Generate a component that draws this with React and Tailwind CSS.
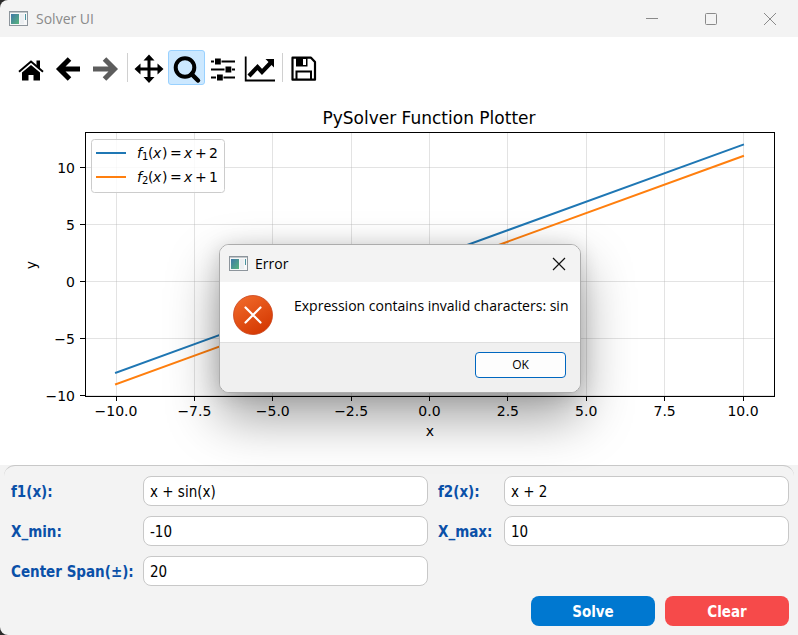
import React from "react";

const uiFont = "font-['Segoe_UI','Open_Sans',sans-serif]";
const formFont = "font-['DejaVu_Sans_Condensed','DejaVu_Sans',sans-serif]";

const xTicks = [-10, -7.5, -5, -2.5, 0, 2.5, 5, 7.5, 10];
const yTicks = [-10, -5, 0, 5, 10];
const px = (x) => 429.5 + x * 31.35;
const py = (y) => 180.5 - y * 11.4;
const minus = (s) => s.replace("-", "\u2212");

function AppIcon() {
  return (
    <svg width="19" height="16" viewBox="0 0 19 16" aria-hidden="true">
      <defs>
        <linearGradient id="pane" x1="0" y1="0" x2="1" y2="1">
          <stop offset="0" stopColor="#3f78a8" />
          <stop offset="1" stopColor="#58b57c" />
        </linearGradient>
      </defs>
      <rect x="0.5" y="0.5" width="18" height="14" fill="#f7f8f9" stroke="#8d959c" />
      <path d="M0 1H19" stroke="#8d959c" />
      <rect x="2" y="3" width="8" height="10" fill="url(#pane)" />
      <rect x="11" y="3" width="4" height="10" fill="#eceff2" />
      <rect x="16" y="3" width="1" height="6" fill="#4a94a0" />
    </svg>
  );
}

function ToolButton({ label, active, children }) {
  return (
    <button
      type="button"
      aria-label={label}
      className={
        active
          ? "h-[35px] w-[37px] rounded-[3px] border border-[#99d1ff] bg-[#cce8ff]"
          : "h-[35px] w-[37px] border border-transparent"
      }
    >
      <svg width="35" height="33" viewBox="1 1 35 33" aria-hidden="true">
        {children}
      </svg>
    </button>
  );
}

function Separator() {
  return (
    <div className="flex w-[7px] justify-center py-[3px]">
      <div className="w-px bg-[#d0d0d0]" />
    </div>
  );
}

function Toolbar() {
  return (
    <div className="flex px-[13px] pt-[13px] pb-4">
      <ToolButton label="Home">
        <path d="M18 15L27 22.500V30.500H20.500V25H15.500V30.500H9V22.500Z" />
        <path d="M6 21.800L18 11.600L30 21.800" fill="none" stroke="#000" strokeWidth="2" />
        <path d="M23.500 10.500H27V19L23.500 16Z" />
      </ToolButton>
      <ToolButton label="Back">
        <path d="M19.500 9L9.500 19L19.500 29M10 19H30" fill="none" stroke="#000" strokeWidth="5" />
      </ToolButton>
      <ToolButton label="Forward">
        <path d="M17.500 9L27.500 19L17.500 29M6 19H27" fill="none" stroke="#5d5d5d" strokeWidth="5" />
      </ToolButton>
      <Separator />
      <ToolButton label="Pan">
        <path d="M18 8V30M7 19H29" stroke="#000" strokeWidth="3" />
        <path d="M18 4.500L23.500 10.500H12.500ZM18 33L23.500 27H12.500ZM3.500 19L9.500 13.500V24.500ZM32.500 19L26.500 13.500V24.500Z" />
      </ToolButton>
      <ToolButton label="Zoom" active>
        <circle cx="17" cy="17.500" r="9.300" fill="none" stroke="#000" strokeWidth="4" />
        <path d="M23.500 24L30 30.500" stroke="#000" strokeWidth="4.500" strokeLinecap="round" />
      </ToolButton>
      <ToolButton label="Configure subplots">
        <path d="M6 11.500H30M6 19.500H30M6 27.500H30" stroke="#000" strokeWidth="2" />
        <path d="M9 8H16.500V15H9ZM19.500 16H27V23H19.500ZM11 24H18.500V31H11Z" fill="#fff" />
        <path d="M10 8.500H15.800V14.500H10ZM20.500 16.500H26.300V22.500H20.500ZM12 24.500H17.800V30.500H12Z" />
      </ToolButton>
      <ToolButton label="Edit axes">
        <path d="M3.700 6.500V30.500H33" fill="none" stroke="#000" strokeWidth="1.800" />
        <path d="M7 26L15.500 17L20 22L29 12.500" fill="none" stroke="#000" strokeWidth="4.200" />
        <path d="M23.500 9H32V17.500Z" />
      </ToolButton>
      <Separator />
      <ToolButton label="Save">
        <path d="M6.500 7.700H25L29 12V29.700H6.500Z" fill="none" stroke="#000" strokeWidth="2.200" strokeLinejoin="round" />
        <path d="M10 8H21.500V16.500H10Z" />
        <path d="M17 9H20V15H17Z" fill="#fff" />
        <path d="M10.500 29V21.500H25V29" fill="none" stroke="#000" strokeWidth="2" />
      </ToolButton>
    </div>
  );
}

function LegendRow({ y, sub, add, color }) {
  return (
    <g>
      <path d={`M96 ${y - 5}H126`} stroke={color} strokeWidth="2" />
      <text y={y}>
        <tspan x="137" fontStyle="italic">f</tspan>
        <tspan x="142" dy="2" fontSize="10">{sub}</tspan>
        <tspan x="148" dy="-2">(</tspan>
        <tspan x="153" fontStyle="italic">x</tspan>
        <tspan x="162">)</tspan>
        <tspan x="170">=</tspan>
        <tspan x="184" fontStyle="italic">x</tspan>
        <tspan x="195">+</tspan>
        <tspan x="209">{add}</tspan>
      </text>
    </g>
  );
}

function Plot() {
  return (
    <svg
      className="block h-auto w-full font-['DejaVu_Sans',sans-serif]"
      viewBox="0 0 798 364"
      fontSize="14"
      role="img"
      aria-label="PySolver Function Plotter"
    >
      <text x="429" y="23" fontSize="17" textAnchor="middle">PySolver Function Plotter</text>
      {xTicks.map((t) => (
        <g key={t}>
          <path d={`M${Math.floor(px(t)) + 0.5} 32V295`} stroke="#b0b0b0" strokeOpacity="0.35" />
          <path d={`M${Math.floor(px(t)) + 0.5} 295V300`} stroke="#000" />
          <text x={px(t)} y="315" textAnchor="middle">{minus(t.toFixed(1))}</text>
        </g>
      ))}
      {yTicks.map((t) => (
        <g key={t}>
          <path d={`M85 ${py(t)}H774`} stroke="#b0b0b0" strokeOpacity="0.35" />
          <path d={`M80 ${py(t)}H85`} stroke="#000" />
          <text x="75" y={py(t) + 5} textAnchor="end">{minus(String(t))}</text>
        </g>
      ))}
      <path d={`M${px(-10)} ${py(-8)}L${px(10)} ${py(12)}`} stroke="#1f77b4" strokeWidth="2" strokeLinecap="square" />
      <path d={`M${px(-10)} ${py(-9)}L${px(10)} ${py(11)}`} stroke="#ff7f0e" strokeWidth="2" strokeLinecap="square" />
      <rect x="85.5" y="31.5" width="689" height="264" fill="none" stroke="#000" />
      <rect x="91.5" y="38.5" width="133" height="53" rx="3" fill="#fff" fillOpacity="0.8" stroke="#ccc" />
      <LegendRow y={57} sub="1" add="2" color="#1f77b4" />
      <LegendRow y={81} sub="2" add="1" color="#ff7f0e" />
      <text x="430" y="335" textAnchor="middle">x</text>
      <text transform="translate(36 164) rotate(-90)" textAnchor="middle">y</text>
    </svg>
  );
}

function Field({ id, label, value }) {
  return (
    <>
      <label htmlFor={id} className="whitespace-nowrap pt-0.5 font-bold text-[#0a50a8]">
        {label}
      </label>
      <input
        id={id}
        type="text"
        defaultValue={value}
        className="h-[30px] w-full min-w-0 rounded-lg border border-[#c8c8c8] bg-white px-1.5 pt-0.5 text-black outline-none"
      />
    </>
  );
}

function ErrorDialog() {
  return (
    <div
      role="dialog"
      aria-labelledby="error-title"
      className={`absolute top-[244px] left-[219px] w-[362px] overflow-hidden rounded-[10px] border border-[#acacac] bg-white shadow-[0_24px_52px_rgba(0,0,0,0.38),0_2px_20px_rgba(0,0,0,0.14)] ${uiFont}`}
    >
      <div className="flex h-[37px] items-center bg-[#f3f3f3] pr-[14px] pl-[9px]">
        <AppIcon />
        <h2 id="error-title" className="ml-[7px] flex-1 text-[14px]">Error</h2>
        <button type="button" aria-label="Close">
          <svg width="14" height="14" viewBox="0 0 14 14" stroke="#111" strokeWidth="1.200">
            <path d="M1 1L13 13M13 1L1 13" />
          </svg>
        </button>
      </div>
      <div className="flex h-[60px] items-start gap-[21px] pt-[13px] pl-[13px]">
        <svg className="shrink-0" width="40" height="40" viewBox="0 0 40 40" aria-hidden="true">
          <defs>
            <linearGradient id="alert" x1="0.200" y1="0" x2="0.800" y2="1">
              <stop offset="0" stopColor="#f0692a" />
              <stop offset="1" stopColor="#d33600" />
            </linearGradient>
          </defs>
          <circle cx="20" cy="20" r="19.500" fill="url(#alert)" stroke="#c9421a" strokeWidth="0.800" />
          <path d="M12.500 12.500L27.500 27.500M27.500 12.500L12.500 27.500" stroke="#fff" strokeWidth="2.200" strokeLinecap="round" />
        </svg>
        <p className="whitespace-nowrap text-[14px] leading-[22px]">Expression contains invalid characters: sin</p>
      </div>
      <div className="flex h-[50px] items-start justify-end border-t border-[#dfdfdf] bg-[#f0f0f0] pt-[9px] pr-[14px]">
        <button type="button" className="h-[26px] w-[91px] rounded border border-[#0067c0] bg-[#fdfdfd] text-[12px]">
          OK
        </button>
      </div>
    </div>
  );
}

export default function App() {
  return (
    <div className="bg-[#2b2b2b]">
      <div className="relative min-h-screen overflow-hidden rounded-l-lg bg-[#f3f3f3] text-black">
        <header className={`flex h-[37px] items-center pl-[9px] pr-[21px] text-[#8a8a8a] ${uiFont}`}>
          <AppIcon />
          <h1 className="ml-[8px] flex-1 text-[14px]">Solver UI</h1>
          <div className="flex gap-[45px]">
            <button type="button" aria-label="Minimize">
              <svg width="14" height="14" viewBox="0 0 14 14" stroke="currentColor"><path d="M1 6.500H13" /></svg>
            </button>
            <button type="button" aria-label="Maximize">
              <svg width="14" height="14" viewBox="0 0 14 14" fill="none" stroke="currentColor"><rect x="1.500" y="1.500" width="11" height="11" rx="1" /></svg>
            </button>
            <button type="button" aria-label="Close window">
              <svg width="14" height="14" viewBox="0 0 14 14" stroke="currentColor"><path d="M1 1L13 13M13 1L1 13" /></svg>
            </button>
          </div>
        </header>
        <main>
          <div className="bg-white">
            <Toolbar />
            <Plot />
          </div>
          <div className="px-1">
            <div className="h-[11px] rounded-t-[11px] border-t border-[#c8c8c8]" />
          </div>
          <form
            className={`pr-[9px] pb-[9px] pl-[11px] text-[15px] ${formFont}`}
            onSubmit={(e) => e.preventDefault()}
          >
            <div className="grid grid-cols-[122px_1fr_56px_1fr] items-center gap-[10px]">
              <Field id="f1" label="f1(x):" value="x + sin(x)" />
              <Field id="f2" label="f2(x):" value="x + 2" />
              <Field id="xmin" label="X_min:" value="-10" />
              <Field id="xmax" label="X_max:" value="10" />
              <Field id="span" label="Center Span(±):" value="20" />
            </div>
            <div className="mt-[10px] flex justify-end gap-[10px] font-bold text-white">
              <button type="submit" className="h-[30px] w-[124px] rounded-lg bg-[#0078d0] pt-0.5">Solve</button>
              <button type="reset" className="h-[30px] w-[124px] rounded-lg bg-[#f64a4a] pt-0.5">Clear</button>
            </div>
          </form>
        </main>
        <ErrorDialog />
      </div>
    </div>
  );
}
